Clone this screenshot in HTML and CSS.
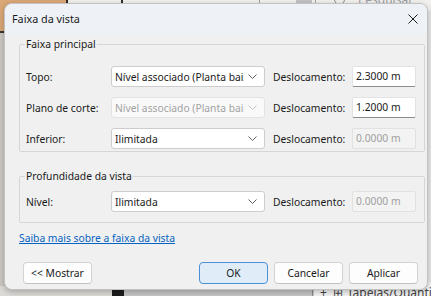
FILE: index.html
```html
<!DOCTYPE html>
<html lang="pt">
<head>
<meta charset="utf-8">
<title>Faixa da vista</title>
<link rel="stylesheet" href="styles.css">
</head>
<body>
<div class="desktop">
  <div class="bg bg-orange"></div>
  <div class="bg bg-orange-line"></div>
  <div class="bg bg-top"></div>
  <div class="bg bg-vline1"></div>
  <div class="bg bg-vline2"></div>
  <div class="bg bg-vline3"></div>
  <div class="bg bg-box"></div>
  <div class="bg bg-vline4"></div>
  <div class="bg bg-search-icon"></div>
  <div class="bg bg-search">Pesquisar</div>
  <div class="bg bg-right"></div>
  <div class="bg bg-bottom-left"></div>
  <div class="bg bg-bottom-dark"></div>
  <div class="bg bg-bottom-mid"></div>
  <div class="bg bg-bottom-right"><span class="plus">+</span><span class="tbl">&#8862;</span>Tabelas/Quantidades</div>

  <div class="dialog">
    <div class="titlebar">
      <span class="title">Faixa da vista</span>
      <svg class="close" width="10" height="10" viewBox="0 0 10 10"><path d="M0.5 0.5 L9.5 9.5 M9.5 0.5 L0.5 9.5" stroke="#1b1b1b" stroke-width="1" fill="none"/></svg>
    </div>
    <div class="content">
      <fieldset class="group group-main">
        <legend>Faixa principal</legend>
        <div class="rows">
          <span class="lbl">Topo:</span>
          <div class="select"><span>Nível associado (Planta baixa)</span><svg class="chev" width="9" height="5" viewBox="0 0 9 5"><path d="M0.5 0.5 L4.5 4.5 L8.5 0.5" stroke="#5f5f5f" fill="none"/></svg></div>
          <span class="lbl desl">Deslocamento:</span>
          <div class="input">2.3000 m</div>

          <span class="lbl">Plano de corte:</span>
          <div class="select disabled"><span>Nível associado (Planta baixa)</span><svg class="chev" width="9" height="5" viewBox="0 0 9 5"><path d="M0.5 0.5 L4.5 4.5 L8.5 0.5" stroke="#c4c4c4" fill="none"/></svg></div>
          <span class="lbl desl">Deslocamento:</span>
          <div class="input">1.2000 m</div>

          <span class="lbl">Inferior:</span>
          <div class="select"><span>Ilimitada</span><svg class="chev" width="9" height="5" viewBox="0 0 9 5"><path d="M0.5 0.5 L4.5 4.5 L8.5 0.5" stroke="#5f5f5f" fill="none"/></svg></div>
          <span class="lbl desl">Deslocamento:</span>
          <div class="input disabled">0.0000 m</div>
        </div>
      </fieldset>

      <fieldset class="group group-depth">
        <legend>Profundidade da vista</legend>
        <div class="rows">
          <span class="lbl">Nível:</span>
          <div class="select"><span>Ilimitada</span><svg class="chev" width="9" height="5" viewBox="0 0 9 5"><path d="M0.5 0.5 L4.5 4.5 L8.5 0.5" stroke="#5f5f5f" fill="none"/></svg></div>
          <span class="lbl desl">Deslocamento:</span>
          <div class="input disabled">0.0000 m</div>
        </div>
      </fieldset>

      <a class="link" href="#">Saiba mais sobre a faixa da vista</a>

      <div class="buttons">
        <button class="btn btn-show">&lt;&lt; Mostrar</button>
        <span class="spacer"></span>
        <button class="btn btn-ok">OK</button>
        <button class="btn">Cancelar</button>
        <button class="btn">Aplicar</button>
      </div>
    </div>
  </div>
</div>
</body>
</html>
```
FILE: styles.css
```css
* { box-sizing: border-box; }
html, body { margin: 0; padding: 0; }
body {
  width: 431px;
  height: 296px;
  overflow: hidden;
  background: #cdc8c2;
  font-family: "Noto Sans", "Open Sans", sans-serif;
  font-size: 10.3px;
  color: #1a1a1a;
}
.desktop { position: relative; width: 431px; height: 296px; }
.bg { position: absolute; }
.bg-orange { left: 0; top: 0; width: 66px; height: 31px; background: #dba877; }
.bg-orange-line { left: 0; top: 31px; width: 66px; height: 2px; background: #3b3530; }
.bg-top { left: 68px; top: 0; width: 363px; height: 12px; background: #f3f1ed; }
.bg-vline1 { left: 66px; top: 0; width: 2px; height: 12px; background: #2e2e2e; }
.bg-vline2 { left: 121px; top: 0; width: 2px; height: 12px; background: #2e2e2e; }
.bg-vline3 { left: 259px; top: 0; width: 1px; height: 12px; background: #a0a0a0; }
.bg-box { left: 296px; top: 0; width: 16px; height: 12px; background: #c2c2c2; }
.bg-vline4 { left: 315px; top: 0; width: 1px; height: 12px; background: #a8a8a8; }
.bg-search-icon { left: 334px; top: -6px; width: 11px; height: 11px; border: 1px solid #8a8a8a; border-radius: 50%; }
.bg-search { left: 358px; top: -9px; font-size: 12px; color: #9aa0a6; }
.bg-right { left: 426px; top: 10px; width: 5px; height: 280px; background: #e9e9e9; border-left: 1px solid #b8b8b8; }
.bg-bottom-left { left: 0; top: 286px; width: 112px; height: 10px; background: #dddbd8; }
.bg-bottom-dark { left: 112px; top: 286px; width: 12px; height: 10px; background: #1d1d1d; }
.bg-bottom-mid { left: 124px; top: 286px; width: 189px; height: 10px; background: #c6c6c6; border-right: 1px solid #8c8c8c; }
.bg-bottom-right { left: 314px; top: 282px; width: 117px; height: 14px; background: #f5f5f5; font-size: 12px; line-height: 14px; color: #444; white-space: nowrap; overflow: hidden; padding-top: 4px; }
.bg-bottom-right .plus { margin-left: 6px; margin-right: 6px; }
.bg-bottom-right .tbl { margin-right: 4px; }

.dialog {
  position: absolute;
  left: 4px;
  top: 3px;
  width: 424px;
  height: 287px;
  background: #f0f0f0;
  border: 1px solid #c2c2c2;
  border-radius: 8px;
  overflow: hidden;
  box-shadow: 0 2px 6px rgba(0, 0, 0, 0.25);
  display: flex;
  flex-direction: column;
}
.titlebar {
  height: 30px;
  flex: none;
  background: #eef2f7;
  display: flex;
  align-items: center;
  justify-content: space-between;
  padding: 0 9px 0 7px;
}
.title { font-size: 10.8px; color: #1a1a1a; line-height: 14px; }
.close { display: block; }

.content {
  display: flex;
  flex-direction: column;
  padding: 3px 2px 0 14px;
}
.group {
  margin: 0;
  border: 1px solid #d6d6d6;
  border-radius: 2px;
  padding: 15px 0 2px 6px;
  min-width: 0;
}
.group legend {
  padding: 0 1px;
  margin-left: -1px;
  line-height: 14px;
  height: 14px;
}
.group-depth { margin-top: 17px; padding-top: 8px; padding-bottom: 10px; }
.rows {
  display: grid;
  grid-template-columns: 85px 154px 87px 64px;
  grid-auto-rows: 21px;
  row-gap: 10px;
  align-items: center;
}
.lbl { line-height: 14px; white-space: nowrap; }
.desl { padding-left: 8px; }
.select {
  height: 21px;
  background: #ffffff;
  border: 1px solid #cdcdcd;
  border-radius: 3px;
  display: flex;
  align-items: center;
  padding: 0 7px 0 3px;
  overflow: hidden;
}
.select span {
  flex: 1;
  min-width: 0;
  white-space: nowrap;
  overflow: hidden;
  line-height: 14px;
}
.select .chev { flex: none; margin-left: 4px; }
.select.disabled { background: #f9f9f9; border-color: #e3e3e3; color: #a3a3a3; }
.input {
  height: 21px;
  background: #ffffff;
  border: 1px solid #e2e2e2;
  border-bottom: 1px solid #8d8d8d;
  border-radius: 2px;
  padding: 0 3px;
  line-height: 19px;
  white-space: nowrap;
}
.input.disabled { background: #f3f3f3; border: 1px solid #e1e1e1; color: #a0a0a0; }

.link {
  margin-top: 8px;
  align-self: flex-start;
  color: #0563c1;
  text-decoration: underline;
  line-height: 14px;
}
.buttons {
  display: flex;
  gap: 6px;
  margin-top: 17px;
  padding: 0 7px 0 4px;
}
.spacer { flex: 1; }
.btn {
  width: 69px;
  height: 22px;
  padding: 0;
  font-family: inherit;
  font-size: 10.3px;
  color: #1a1a1a;
  background: #fdfdfd;
  border: 1px solid #d3d3d3;
  border-bottom-color: #c2c2c2;
  border-radius: 4px;
}
.btn-ok { background: #e0edf9; border: 1px solid #4a90d9; }
```
